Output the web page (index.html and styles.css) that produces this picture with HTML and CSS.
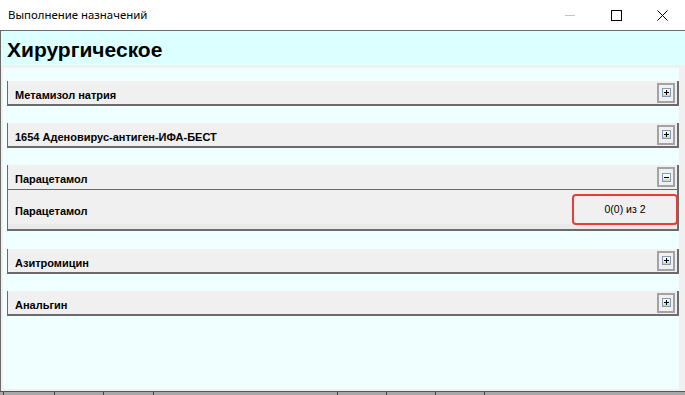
FILE: index.html
```html
<!DOCTYPE html>
<html lang="ru">
<head>
    <meta charset="UTF-8">
    <title>Выполнение назначений</title>
    <link rel="stylesheet" href="styles.css">
</head>
<body>
    <div class="titlebar">
        <span class="title">Выполнение назначений</span>
        <div class="controls">
            <span class="ctl">
                <svg width="10" height="10" viewBox="0 0 10 10"><path d="M0 5.5H10" stroke="#c4c4c4" stroke-width="1"/></svg>
            </span>
            <span class="ctl">
                <svg width="11" height="11" viewBox="0 0 11 11"><rect x="0.5" y="0.5" width="10" height="10" fill="none" stroke="#000" stroke-width="1"/></svg>
            </span>
            <span class="ctl">
                <svg width="11" height="11" viewBox="0 0 11 11"><path d="M0.5 0.5L10.5 10.5M10.5 0.5L0.5 10.5" stroke="#000" stroke-width="1"/></svg>
            </span>
        </div>
    </div>

    <div class="frame">
        <div class="header">Хирургическое</div>

        <div class="content">
            <div class="group">
                <div class="group-head">
                    <span class="name">Метамизол натрия</span>
                    <span class="toggle"><span class="glyph plus"></span></span>
                </div>
            </div>

            <div class="group">
                <div class="group-head">
                    <span class="name">1654 Аденовирус-антиген-ИФА-БЕСТ</span>
                    <span class="toggle"><span class="glyph plus"></span></span>
                </div>
            </div>

            <div class="group open">
                <div class="group-head">
                    <span class="name">Парацетамол</span>
                    <span class="toggle"><span class="glyph minus"></span></span>
                </div>
                <div class="item">
                    <span class="name">Парацетамол</span>
                    <span class="count">0(0) из 2</span>
                </div>
            </div>

            <div class="group">
                <div class="group-head">
                    <span class="name">Азитромицин</span>
                    <span class="toggle"><span class="glyph plus"></span></span>
                </div>
            </div>

            <div class="group">
                <div class="group-head">
                    <span class="name">Анальгин</span>
                    <span class="toggle"><span class="glyph plus"></span></span>
                </div>
            </div>
        </div>

        <!-- краешек окна, которое лежит под формой -->
        <div class="behind">
            <span></span><span></span><span></span><span></span><span></span><span></span><span></span><span></span><span></span>
        </div>
    </div>
</body>
</html>
```

FILE: styles.css
```css
body {
    margin: 0;
    width: 685px;
    height: 395px;
    overflow: hidden;
    background: #f0f0f0;
    font-family: "Liberation Sans", Arial, sans-serif;
    color: #000;
}
.titlebar {
    height: 30px;
    background: #fff;
    display: flex;
    align-items: center;
    justify-content: space-between;
    border-bottom: 1px solid #6b6b6b;
}
.title {
    font-family: "Noto Sans", sans-serif;
    font-size: 11.4px;
    padding-left: 8px;
    margin-top: -1px;
}
.controls {
    display: flex;
    height: 30px;
}
.ctl {
    width: 46px;
    display: flex;
    align-items: center;
    justify-content: center;
}
.ctl svg {
    display: block;
}
.frame {
    border-left: 1px solid #6b6b6b;
}
.header {
    height: 30px;
    padding: 4px 0 0 6px;
    background: #dcffff;
    font-size: 21px;
    font-weight: bold;
    line-height: 30px;
}
.content {
    height: 308px;
    margin: 3px 6px 2px 2px;
    padding: 13px 0 0 4px;
    background: #f0ffff;
}
.group {
    background: #f0f0f0;
    border-left: 1px solid #6b6b6b;
    border-right: 2px solid #6b6b6b;
    border-bottom: 2px solid #6b6b6b;
    margin-bottom: 17px;
}
.group.open {
    margin-bottom: 18px;
}
.group-head {
    height: 23px;
    display: flex;
    align-items: center;
    justify-content: space-between;
}
.group.open .group-head {
    height: 24px;
    border-bottom: 1px solid #6b6b6b;
}
.name {
    font-size: 11px;
    font-weight: bold;
    padding: 4px 0 0 7px;
}
.toggle {
    width: 14px;
    height: 16px;
    border: 2px solid #a3a3a3;
    margin-right: 2px;
    display: flex;
    align-items: center;
    justify-content: center;
}
.glyph {
    width: 7px;
    height: 7px;
    border: 1px solid #7f9db9;
    background: linear-gradient(#ffffff, #f4eee2 55%, #d9ccb0);
    position: relative;
}
.glyph::before,
.plus::after {
    content: "";
    position: absolute;
    background: #000;
}
.glyph::before {
    left: 1px;
    top: 3px;
    width: 5px;
    height: 1px;
}
.plus::after {
    left: 3px;
    top: 1px;
    width: 1px;
    height: 5px;
}
.item {
    height: 39px;
    display: flex;
    align-items: center;
    justify-content: space-between;
    box-shadow: inset 0 -5px 0 #e9e9e9;
}
.item .name {
    padding-top: 2px;
}
.count {
    width: 102px;
    height: 25px;
    margin-right: -1px;
    border: 2px solid #e53e36;
    border-radius: 4px;
    font-size: 10.5px;
    display: flex;
    align-items: center;
    justify-content: center;
    padding-bottom: 2px;
}
.behind {
    height: 3px;
    margin-left: -1px;
    border-top: 1px solid #555;
    background: #a8a8a8;
    display: flex;
}
.behind span {
    border-left: 1px solid #444;
}
.behind span:nth-child(1) { width: 3px; border-left: 0; }
.behind span:nth-child(2) { width: 50px; }
.behind span:nth-child(3) { width: 48px; }
.behind span:nth-child(4) { width: 49px; }
.behind span:nth-child(5) { width: 183px; }
.behind span:nth-child(6) { width: 48px; }
.behind span:nth-child(7) { width: 48px; }
.behind span:nth-child(8) { width: 48px; }
.behind span:nth-child(9) { flex: 1; }
```
